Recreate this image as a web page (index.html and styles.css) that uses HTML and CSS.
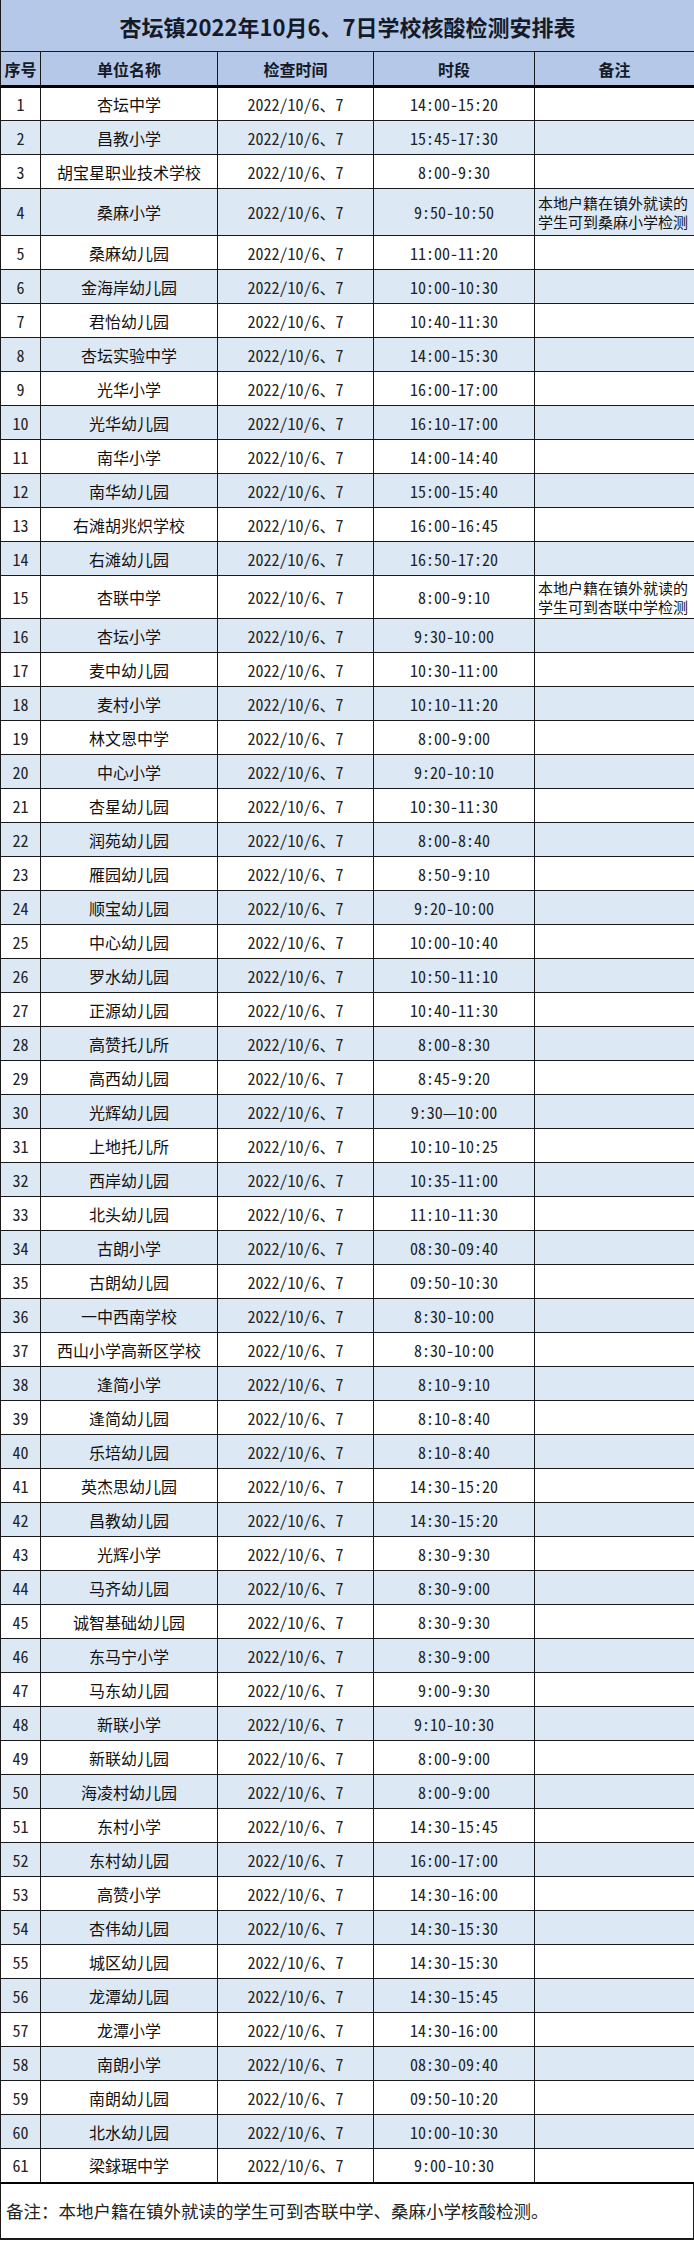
FILE: index.html
```html
<!DOCTYPE html>
<html lang="zh-CN">
<head>
<meta charset="utf-8">
<title>杏坛镇2022年10月6、7日学校核酸检测安排表</title>
<link rel="stylesheet" href="styles.css">
</head>
<body>
<div class="sheet">
<table class="grid">
<colgroup><col class="c1"><col class="c2"><col class="c3"><col class="c4"><col class="c5"></colgroup>
<thead>
<tr class="title"><th colspan="5">杏坛镇2022年10月6、7日学校核酸检测安排表</th></tr>
<tr class="head"><th>序号</th><th>单位名称</th><th>检查时间</th><th>时段</th><th>备注</th></tr>
</thead>
<tbody>
<tr><td class="num">1</td><td>杏坛中学</td><td class="num">2022/10/6、7</td><td class="num">14:00-15:20</td><td></td></tr>
<tr class="alt"><td class="num">2</td><td>昌教小学</td><td class="num">2022/10/6、7</td><td class="num">15:45-17:30</td><td></td></tr>
<tr><td class="num">3</td><td>胡宝星职业技术学校</td><td class="num">2022/10/6、7</td><td class="num">8:00-9:30</td><td></td></tr>
<tr class="alt tall"><td class="num">4</td><td>桑麻小学</td><td class="num">2022/10/6、7</td><td class="num">9:50-10:50</td><td class="note">本地户籍在镇外就读的学生可到桑麻小学检测</td></tr>
<tr><td class="num">5</td><td>桑麻幼儿园</td><td class="num">2022/10/6、7</td><td class="num">11:00-11:20</td><td></td></tr>
<tr class="alt"><td class="num">6</td><td>金海岸幼儿园</td><td class="num">2022/10/6、7</td><td class="num">10:00-10:30</td><td></td></tr>
<tr><td class="num">7</td><td>君怡幼儿园</td><td class="num">2022/10/6、7</td><td class="num">10:40-11:30</td><td></td></tr>
<tr class="alt"><td class="num">8</td><td>杏坛实验中学</td><td class="num">2022/10/6、7</td><td class="num">14:00-15:30</td><td></td></tr>
<tr><td class="num">9</td><td>光华小学</td><td class="num">2022/10/6、7</td><td class="num">16:00-17:00</td><td></td></tr>
<tr class="alt"><td class="num">10</td><td>光华幼儿园</td><td class="num">2022/10/6、7</td><td class="num">16:10-17:00</td><td></td></tr>
<tr><td class="num">11</td><td>南华小学</td><td class="num">2022/10/6、7</td><td class="num">14:00-14:40</td><td></td></tr>
<tr class="alt"><td class="num">12</td><td>南华幼儿园</td><td class="num">2022/10/6、7</td><td class="num">15:00-15:40</td><td></td></tr>
<tr><td class="num">13</td><td>右滩胡兆炽学校</td><td class="num">2022/10/6、7</td><td class="num">16:00-16:45</td><td></td></tr>
<tr class="alt"><td class="num">14</td><td>右滩幼儿园</td><td class="num">2022/10/6、7</td><td class="num">16:50-17:20</td><td></td></tr>
<tr class="tall2"><td class="num">15</td><td>杏联中学</td><td class="num">2022/10/6、7</td><td class="num">8:00-9:10</td><td class="note">本地户籍在镇外就读的学生可到杏联中学检测</td></tr>
<tr class="alt"><td class="num">16</td><td>杏坛小学</td><td class="num">2022/10/6、7</td><td class="num">9:30-10:00</td><td></td></tr>
<tr><td class="num">17</td><td>麦中幼儿园</td><td class="num">2022/10/6、7</td><td class="num">10:30-11:00</td><td></td></tr>
<tr class="alt"><td class="num">18</td><td>麦村小学</td><td class="num">2022/10/6、7</td><td class="num">10:10-11:20</td><td></td></tr>
<tr><td class="num">19</td><td>林文恩中学</td><td class="num">2022/10/6、7</td><td class="num">8:00-9:00</td><td></td></tr>
<tr class="alt"><td class="num">20</td><td>中心小学</td><td class="num">2022/10/6、7</td><td class="num">9:20-10:10</td><td></td></tr>
<tr><td class="num">21</td><td>杏星幼儿园</td><td class="num">2022/10/6、7</td><td class="num">10:30-11:30</td><td></td></tr>
<tr class="alt"><td class="num">22</td><td>润苑幼儿园</td><td class="num">2022/10/6、7</td><td class="num">8:00-8:40</td><td></td></tr>
<tr><td class="num">23</td><td>雁园幼儿园</td><td class="num">2022/10/6、7</td><td class="num">8:50-9:10</td><td></td></tr>
<tr class="alt"><td class="num">24</td><td>顺宝幼儿园</td><td class="num">2022/10/6、7</td><td class="num">9:20-10:00</td><td></td></tr>
<tr><td class="num">25</td><td>中心幼儿园</td><td class="num">2022/10/6、7</td><td class="num">10:00-10:40</td><td></td></tr>
<tr class="alt"><td class="num">26</td><td>罗水幼儿园</td><td class="num">2022/10/6、7</td><td class="num">10:50-11:10</td><td></td></tr>
<tr><td class="num">27</td><td>正源幼儿园</td><td class="num">2022/10/6、7</td><td class="num">10:40-11:30</td><td></td></tr>
<tr class="alt"><td class="num">28</td><td>高赞托儿所</td><td class="num">2022/10/6、7</td><td class="num">8:00-8:30</td><td></td></tr>
<tr><td class="num">29</td><td>高西幼儿园</td><td class="num">2022/10/6、7</td><td class="num">8:45-9:20</td><td></td></tr>
<tr class="alt"><td class="num">30</td><td>光辉幼儿园</td><td class="num">2022/10/6、7</td><td class="num">9:30—10:00</td><td></td></tr>
<tr><td class="num">31</td><td>上地托儿所</td><td class="num">2022/10/6、7</td><td class="num">10:10-10:25</td><td></td></tr>
<tr class="alt"><td class="num">32</td><td>西岸幼儿园</td><td class="num">2022/10/6、7</td><td class="num">10:35-11:00</td><td></td></tr>
<tr><td class="num">33</td><td>北头幼儿园</td><td class="num">2022/10/6、7</td><td class="num">11:10-11:30</td><td></td></tr>
<tr class="alt"><td class="num">34</td><td>古朗小学</td><td class="num">2022/10/6、7</td><td class="num">08:30-09:40</td><td></td></tr>
<tr><td class="num">35</td><td>古朗幼儿园</td><td class="num">2022/10/6、7</td><td class="num">09:50-10:30</td><td></td></tr>
<tr class="alt"><td class="num">36</td><td>一中西南学校</td><td class="num">2022/10/6、7</td><td class="num">8:30-10:00</td><td></td></tr>
<tr><td class="num">37</td><td>西山小学高新区学校</td><td class="num">2022/10/6、7</td><td class="num">8:30-10:00</td><td></td></tr>
<tr class="alt"><td class="num">38</td><td>逢简小学</td><td class="num">2022/10/6、7</td><td class="num">8:10-9:10</td><td></td></tr>
<tr><td class="num">39</td><td>逢简幼儿园</td><td class="num">2022/10/6、7</td><td class="num">8:10-8:40</td><td></td></tr>
<tr class="alt"><td class="num">40</td><td>乐培幼儿园</td><td class="num">2022/10/6、7</td><td class="num">8:10-8:40</td><td></td></tr>
<tr><td class="num">41</td><td>英杰思幼儿园</td><td class="num">2022/10/6、7</td><td class="num">14:30-15:20</td><td></td></tr>
<tr class="alt"><td class="num">42</td><td>昌教幼儿园</td><td class="num">2022/10/6、7</td><td class="num">14:30-15:20</td><td></td></tr>
<tr><td class="num">43</td><td>光辉小学</td><td class="num">2022/10/6、7</td><td class="num">8:30-9:30</td><td></td></tr>
<tr class="alt"><td class="num">44</td><td>马齐幼儿园</td><td class="num">2022/10/6、7</td><td class="num">8:30-9:00</td><td></td></tr>
<tr><td class="num">45</td><td>诚智基础幼儿园</td><td class="num">2022/10/6、7</td><td class="num">8:30-9:30</td><td></td></tr>
<tr class="alt"><td class="num">46</td><td>东马宁小学</td><td class="num">2022/10/6、7</td><td class="num">8:30-9:00</td><td></td></tr>
<tr><td class="num">47</td><td>马东幼儿园</td><td class="num">2022/10/6、7</td><td class="num">9:00-9:30</td><td></td></tr>
<tr class="alt"><td class="num">48</td><td>新联小学</td><td class="num">2022/10/6、7</td><td class="num">9:10-10:30</td><td></td></tr>
<tr><td class="num">49</td><td>新联幼儿园</td><td class="num">2022/10/6、7</td><td class="num">8:00-9:00</td><td></td></tr>
<tr class="alt"><td class="num">50</td><td>海凌村幼儿园</td><td class="num">2022/10/6、7</td><td class="num">8:00-9:00</td><td></td></tr>
<tr><td class="num">51</td><td>东村小学</td><td class="num">2022/10/6、7</td><td class="num">14:30-15:45</td><td></td></tr>
<tr class="alt"><td class="num">52</td><td>东村幼儿园</td><td class="num">2022/10/6、7</td><td class="num">16:00-17:00</td><td></td></tr>
<tr><td class="num">53</td><td>高赞小学</td><td class="num">2022/10/6、7</td><td class="num">14:30-16:00</td><td></td></tr>
<tr class="alt"><td class="num">54</td><td>杏伟幼儿园</td><td class="num">2022/10/6、7</td><td class="num">14:30-15:30</td><td></td></tr>
<tr><td class="num">55</td><td>城区幼儿园</td><td class="num">2022/10/6、7</td><td class="num">14:30-15:30</td><td></td></tr>
<tr class="alt"><td class="num">56</td><td>龙潭幼儿园</td><td class="num">2022/10/6、7</td><td class="num">14:30-15:45</td><td></td></tr>
<tr><td class="num">57</td><td>龙潭小学</td><td class="num">2022/10/6、7</td><td class="num">14:30-16:00</td><td></td></tr>
<tr class="alt"><td class="num">58</td><td>南朗小学</td><td class="num">2022/10/6、7</td><td class="num">08:30-09:40</td><td></td></tr>
<tr><td class="num">59</td><td>南朗幼儿园</td><td class="num">2022/10/6、7</td><td class="num">09:50-10:20</td><td></td></tr>
<tr class="alt"><td class="num">60</td><td>北水幼儿园</td><td class="num">2022/10/6、7</td><td class="num">10:00-10:30</td><td></td></tr>
<tr class="last"><td class="num">61</td><td>梁銶琚中学</td><td class="num">2022/10/6、7</td><td class="num">9:00-10:30</td><td></td></tr>
</tbody>
</table>
<div class="foot">备注：本地户籍在镇外就读的学生可到杏联中学、桑麻小学核酸检测。</div>
</div>
</body>
</html>
```
FILE: styles.css
```css
html, body {
  margin: 0;
  padding: 0;
  background: #ffffff;
}
body {
  font-family: "Noto Sans CJK SC", "Noto Sans", sans-serif;
  color: #111;
}
.sheet {
  width: 694px;
}
.grid {
  width: 694px;
  border-collapse: collapse;
  table-layout: fixed;
}
.c1 { width: 40px; }
.c2 { width: 177px; }
.c3 { width: 156px; }
.c4 { width: 161px; }
.c5 { width: 160px; }
.grid th,
.grid td {
  border: 1px solid #1a1a1a;
  padding: 0;
  text-align: center;
  vertical-align: middle;
  white-space: nowrap;
  overflow: hidden;
  font-size: 16px;
  font-weight: normal;
  line-height: 20px;
}
.title th {
  height: 51px;
  border-top: none;
  background: #b6c8e8;
  font-size: 22px;
  font-weight: bold;
  color: #141a28;
}
.head th {
  height: 33px;
  background: #b6c8e8;
  font-weight: bold;
  color: #141a28;
  border-bottom: 3px solid #000;
}
.grid tbody tr {
  height: 34px;
}
.grid tbody tr.tall {
  height: 47px;
}
.grid tbody tr.tall2 {
  height: 43px;
}
.grid tbody tr.alt td {
  background: #dde8f5;
}
.grid td.num {
  font-family: "Noto Sans Mono CJK SC", "Liberation Mono", monospace;
  font-size: 16px;
  color: #222;
}
.grid td.note {
  text-align: left;
  white-space: normal;
  font-size: 15px;
  line-height: 19px;
  padding-left: 3px;
}
.grid tr.last td {
  border-bottom: 2px solid #000;
}
.foot {
  height: 56px;
  box-sizing: border-box;
  border: 1px solid #1a1a1a;
  border-top: none;
  border-bottom-width: 2px;
  display: flex;
  align-items: center;
  padding-left: 5px;
  font-size: 17.5px;
  color: #222;
}
```
